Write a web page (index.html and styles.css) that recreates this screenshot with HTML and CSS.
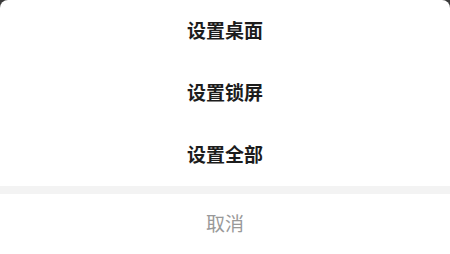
FILE: index.html
```html
<!DOCTYPE html>
<html>
<head>
    <title>设置壁纸</title>
    <meta charset="UTF-8">
    <link rel="stylesheet" href="styles.css">
</head>
<body>
    <div class="sheet">
        <div class="option">设置桌面</div>
        <div class="option">设置锁屏</div>
        <div class="option">设置全部</div>
        <div class="divider"></div>
        <div class="cancel">取消</div>
    </div>
</body>
</html>
```

FILE: styles.css
```css
body {
    margin: 0;
    background: #3a3a3a;
    font-family: "Noto Sans CJK SC", "Noto Sans", sans-serif;
}

.sheet {
    background: #fff;
    border-radius: 8px 8px 0 0;
    height: 254px;
    overflow: hidden;
}

.option {
    height: 58px;
    padding-bottom: 4px;
    display: flex;
    align-items: center;
    justify-content: center;
    font-size: 19px;
    font-weight: bold;
    color: #1c1c1c;
}

.divider {
    height: 8px;
    background: #f3f3f3;
}

.cancel {
    height: 56px;
    padding-bottom: 4px;
    display: flex;
    align-items: center;
    justify-content: center;
    font-size: 19px;
    color: #999;
}
```
